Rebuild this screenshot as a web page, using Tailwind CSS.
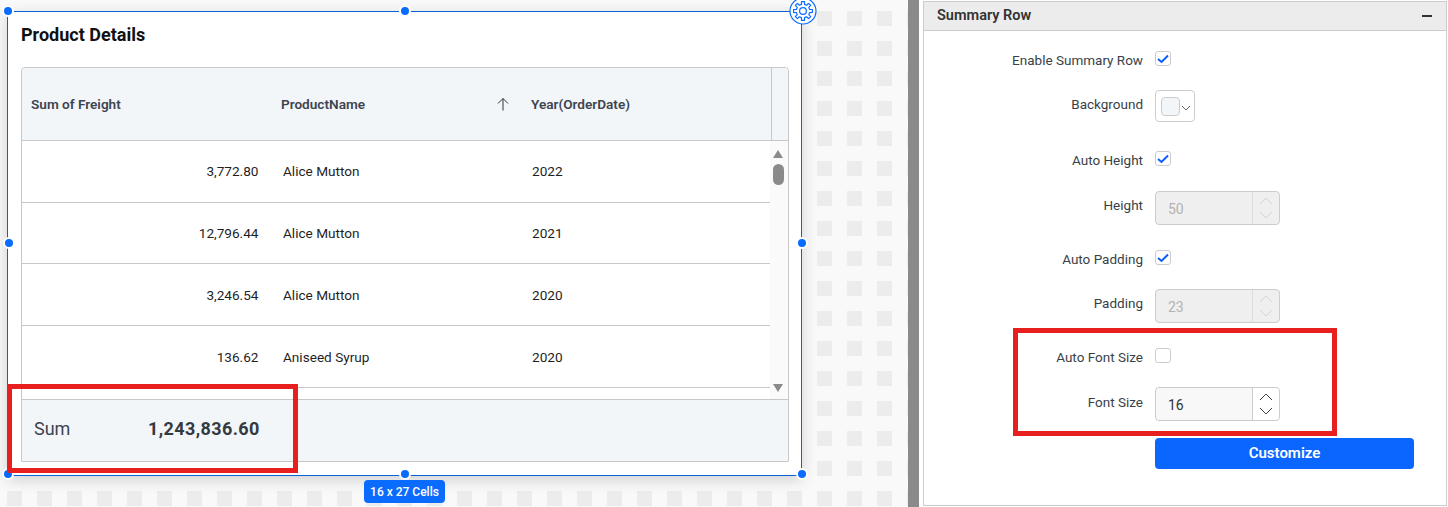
<!DOCTYPE html>
<html lang="en">
<head>
    <meta charset="UTF-8">
    <title>Summary Row</title>
    <script src="https://cdn.jsdelivr.net/npm/@tailwindcss/browser@4"></script>
</head>

<body class="w-[1448px] h-[507px] overflow-hidden flex font-['Roboto',sans-serif] bg-white">
    <!-- designer canvas -->
    <div class="relative w-[908px] h-[507px] bg-[#f9f9f9] bg-[conic-gradient(#ececec_25%,transparent_25%)] bg-[size:30px_30px] bg-[position:-8px_11px]">
        <div class="absolute left-[7px] top-[11px] w-[795px] h-[465px] bg-white border border-[#0b62d6] shadow-[0_4px_14px_rgba(0,0,0,0.16)] pl-[13px] pr-[12px] flex flex-col">
            <h1 class="h-[55px] pt-[11px] text-[18px] leading-[24px] font-bold text-[#111]">Product Details</h1>
            <div class="h-[395px] border border-[#c8c8c8] rounded-t-[4px] flex flex-col">
                <div class="h-[73px] shrink-0 flex items-center bg-[#f3f6f9] border-b border-[#c8c8c8] rounded-t-[4px] text-[13.6px] font-semibold text-[#3c4450]">
                    <div class="w-[250px] pl-[9px] pt-[1px]">Sum of Freight</div>
                    <div class="w-[250px] pl-[9px] pt-[1px] pr-[12px] flex items-center justify-between">
                        <span>ProductName</span>
                        <svg width="14" height="14" viewBox="0 0 14 14" fill="none" stroke="#333" stroke-width="1"><path d="M7 13.5V1.5M2 6.5l5-5 5 5"/></svg>
                    </div>
                    <div class="w-[250px] h-full pl-[9px] pt-[1px] flex items-center border-r border-[#c8c8c8]">Year(OrderDate)</div>
                </div>
                <div class="h-[258px] shrink-0 flex">
                    <div class="w-[748px] text-[13.6px] text-[#1f1f1f]">
                        <div class="h-[61.7px] flex items-center border-b border-[#c8c8c8]">
                            <div class="w-[250px] pr-[13.5px] text-right">3,772.80</div>
                            <div class="w-[250px] pl-[11px]">Alice Mutton</div>
                            <div class="pl-[10px]">2022</div>
                        </div>
                        <div class="h-[61.7px] pt-[1px] flex items-center border-b border-[#c8c8c8]">
                            <div class="w-[250px] pr-[13.5px] text-right">12,796.44</div>
                            <div class="w-[250px] pl-[11px]">Alice Mutton</div>
                            <div class="pl-[10px]">2021</div>
                        </div>
                        <div class="h-[61.7px] pt-[1px] flex items-center border-b border-[#c8c8c8]">
                            <div class="w-[250px] pr-[13.5px] text-right">3,246.54</div>
                            <div class="w-[250px] pl-[11px]">Alice Mutton</div>
                            <div class="pl-[10px]">2020</div>
                        </div>
                        <div class="h-[61.7px] pt-[1px] flex items-center border-b border-[#c8c8c8]">
                            <div class="w-[250px] pr-[13.5px] text-right">136.62</div>
                            <div class="w-[250px] pl-[11px]">Aniseed Syrup</div>
                            <div class="pl-[10px]">2020</div>
                        </div>
                    </div>
                    <div class="flex-1 bg-[#fafafa] flex flex-col items-center pt-[9px] pb-[7px] pr-[2px]">
                        <svg width="10" height="8" viewBox="0 0 10 8" fill="#8a8a8a"><path d="M5 0l5 8H0z"/></svg>
                        <div class="w-[11px] h-[21px] mt-[6px] rounded-full bg-[#8a8a8a]"></div>
                        <svg class="mt-auto" width="10" height="8" viewBox="0 0 10 8" fill="#8a8a8a"><path d="M5 8L0 0h10z"/></svg>
                    </div>
                </div>
                <div class="flex-1 flex items-center pb-[5px] bg-[#f3f6f9] border-t border-[#c8c8c8] text-[18px] text-[#3c4450]">
                    <div class="pl-[12px] w-[126px]">Sum</div>
                    <div class="w-[111px] text-right font-bold tracking-[0.4px] whitespace-nowrap text-[#343a40]">1,243,836.60</div>
                </div>
            </div>
        </div>

        <!-- resize handles -->
        <span class="absolute left-[4px] top-[7px] size-[8px] rounded-full bg-[#0a6cff] ring-2 ring-white"></span>
        <span class="absolute left-[401px] top-[7px] size-[8px] rounded-full bg-[#0a6cff] ring-2 ring-white"></span>
        <span class="absolute left-[5px] top-[239px] size-[8px] rounded-full bg-[#0a6cff] ring-2 ring-white"></span>
        <span class="absolute left-[798px] top-[239px] size-[8px] rounded-full bg-[#0a6cff] ring-2 ring-white"></span>
        <span class="absolute left-[4px] top-[470px] size-[8px] rounded-full bg-[#0a6cff] ring-2 ring-white"></span>
        <span class="absolute left-[401px] top-[470px] size-[8px] rounded-full bg-[#0a6cff] ring-2 ring-white"></span>
        <span class="absolute left-[798px] top-[470px] size-[8px] rounded-full bg-[#0a6cff] ring-2 ring-white"></span>

        <!-- settings gear -->
        <svg class="absolute left-[789px] top-[-3px]" width="28" height="28" viewBox="-14 -14 28 28" fill="none" stroke="#0a6cff">
            <circle r="13" fill="#fff" stroke-width="1.2"/>
            <polygon stroke-width="1.2" stroke-linejoin="round" points="-1.53,-6.63 -1.49,-9.38 1.49,-9.38 1.53,-6.63 3.61,-5.77 5.58,-7.69 7.69,-5.58 5.77,-3.61 6.63,-1.53 9.38,-1.49 9.38,1.49 6.63,1.53 5.77,3.61 7.69,5.58 5.58,7.69 3.61,5.77 1.53,6.63 1.49,9.38 -1.49,9.38 -1.53,6.63 -3.61,5.77 -5.58,7.69 -7.69,5.58 -5.77,3.61 -6.63,1.53 -9.38,1.49 -9.38,-1.49 -6.63,-1.53 -5.77,-3.61 -7.69,-5.58 -5.58,-7.69 -3.61,-5.77"/>
            <circle r="3.4" stroke-width="1.2"/>
        </svg>

        <div class="absolute left-[364px] top-[480px] w-[81px] h-[23px] rounded-[4px] bg-[#0a6cff] text-white text-[12px] font-medium flex items-center justify-center">16 x 27 Cells</div>

        <!-- callout on the summary cell -->
        <div class="absolute left-[7px] top-[384px] w-[291px] h-[89px] border-[5px] border-[#e81f1f]"></div>
    </div>

    <div class="w-[11px] h-[507px] bg-[#8a8a8a]"></div>

    <!-- properties panel -->
    <div class="flex-1 pl-[4px] pr-[1px] pt-[1px]">
        <div class="relative h-[505px] border border-[#cccccc] text-[13.5px] text-[#3a3f47]">
            <div class="h-[29px] flex items-center justify-between bg-[#ececec] border-b border-[#cccccc] pl-[13px] pr-[14px]">
                <span class="text-[14.5px] font-semibold text-[#333]">Summary Row</span>
                <span class="w-[10px] h-[1.5px] bg-[#333]"></span>
            </div>

            <div class="pt-[19px]">
                <div class="h-[40px] flex items-start gap-[12px]">
                    <label class="w-[219px] text-right leading-[20px]">Enable Summary Row</label>
                    <span class="mt-[1px] w-[16px] h-[15px] rounded-[3px] border border-[#cccccc] bg-white flex items-center justify-center">
                        <svg width="12" height="10" viewBox="0 0 12 10" fill="none" stroke="#0a5cff" stroke-width="2"><path d="M1 5l3.5 3L11 1.5"/></svg>
                    </span>
                </div>
                <div class="h-[60px] flex items-start gap-[12px]">
                    <label class="w-[219px] mt-[4px] text-right leading-[20px]">Background</label>
                    <div class="w-[40px] h-[32px] rounded-[4px] border border-[#cccccc] flex items-center pl-[5px] gap-[1px]">
                        <span class="size-[19px] rounded-[4px] border border-[#cccccc] bg-[#f3f6f9]"></span>
                        <svg class="mt-[4px]" width="10" height="6" viewBox="0 0 10 6" fill="none" stroke="#555" stroke-width="0.9"><path d="M1 1l4 4 4-4"/></svg>
                    </div>
                </div>
                <div class="h-[41px] flex items-start gap-[12px]">
                    <label class="w-[219px] text-right leading-[20px]">Auto Height</label>
                    <span class="mt-[1px] w-[16px] h-[15px] rounded-[3px] border border-[#cccccc] bg-white flex items-center justify-center">
                        <svg width="12" height="10" viewBox="0 0 12 10" fill="none" stroke="#0a5cff" stroke-width="2"><path d="M1 5l3.5 3L11 1.5"/></svg>
                    </span>
                </div>
                <div class="h-[58px] flex items-start gap-[12px]">
                    <label class="w-[219px] mt-[4px] text-right leading-[20px]">Height</label>
                    <div class="w-[125px] h-[34px] rounded-[4px] border border-[#cccccc] bg-[#efefef] flex">
                        <span class="flex-1 pl-[12px] pt-[1px] leading-[32px] text-[14px] text-[#b3b3b3]">50</span>
                        <div class="w-[27px] border-l border-[#dcdcdc] flex flex-col items-center justify-center gap-[6px]">
                            <svg width="14" height="8" viewBox="0 0 14 8" fill="none" stroke="#d4d4d4"><path d="M1 7l6-6 6 6"/></svg>
                            <svg width="14" height="8" viewBox="0 0 14 8" fill="none" stroke="#d4d4d4"><path d="M1 1l6 6 6-6"/></svg>
                        </div>
                    </div>
                </div>
                <div class="h-[40px] flex items-start gap-[12px]">
                    <label class="w-[219px] text-right leading-[20px]">Auto Padding</label>
                    <span class="mt-[1px] w-[16px] h-[15px] rounded-[3px] border border-[#cccccc] bg-white flex items-center justify-center">
                        <svg width="12" height="10" viewBox="0 0 12 10" fill="none" stroke="#0a5cff" stroke-width="2"><path d="M1 5l3.5 3L11 1.5"/></svg>
                    </span>
                </div>
                <div class="h-[58px] flex items-start gap-[12px]">
                    <label class="w-[219px] mt-[4px] text-right leading-[20px]">Padding</label>
                    <div class="w-[125px] h-[34px] rounded-[4px] border border-[#cccccc] bg-[#efefef] flex">
                        <span class="flex-1 pl-[12px] pt-[1px] leading-[32px] text-[14px] text-[#b3b3b3]">23</span>
                        <div class="w-[27px] border-l border-[#dcdcdc] flex flex-col items-center justify-center gap-[6px]">
                            <svg width="14" height="8" viewBox="0 0 14 8" fill="none" stroke="#d4d4d4"><path d="M1 7l6-6 6 6"/></svg>
                            <svg width="14" height="8" viewBox="0 0 14 8" fill="none" stroke="#d4d4d4"><path d="M1 1l6 6 6-6"/></svg>
                        </div>
                    </div>
                </div>
                <div class="h-[40px] flex items-start gap-[12px]">
                    <label class="w-[219px] text-right leading-[20px]">Auto Font Size</label>
                    <span class="mt-[1px] w-[16px] h-[15px] rounded-[3px] border border-[#cccccc] bg-white"></span>
                </div>
                <div class="h-[51px] flex items-start gap-[12px]">
                    <label class="w-[219px] mt-[5px] text-right leading-[20px]">Font Size</label>
                    <div class="w-[125px] h-[34px] rounded-[4px] border border-[#cccccc] bg-[#f8f8f8] flex">
                        <span class="flex-1 pl-[12px] pt-[1px] leading-[32px] text-[14px] text-[#333]">16</span>
                        <div class="w-[27px] rounded-r-[4px] bg-white border-l border-[#cccccc] flex flex-col items-center justify-center gap-[6px]">
                            <svg width="14" height="8" viewBox="0 0 14 8" fill="none" stroke="#444"><path d="M1 7l6-6 6 6"/></svg>
                            <svg width="14" height="8" viewBox="0 0 14 8" fill="none" stroke="#444"><path d="M1 1l6 6 6-6"/></svg>
                        </div>
                    </div>
                </div>
                <div class="pl-[231px]">
                    <button class="w-[259px] h-[31px] rounded-[4px] bg-[#0a66ff] text-white text-[15px] font-semibold">Customize</button>
                </div>
            </div>

            <!-- callout on the font size rows -->
            <div class="absolute left-[89px] top-[326px] w-[324px] h-[108px] border-[5px] border-[#e81f1f]"></div>
        </div>
    </div>
</body>
</html>
